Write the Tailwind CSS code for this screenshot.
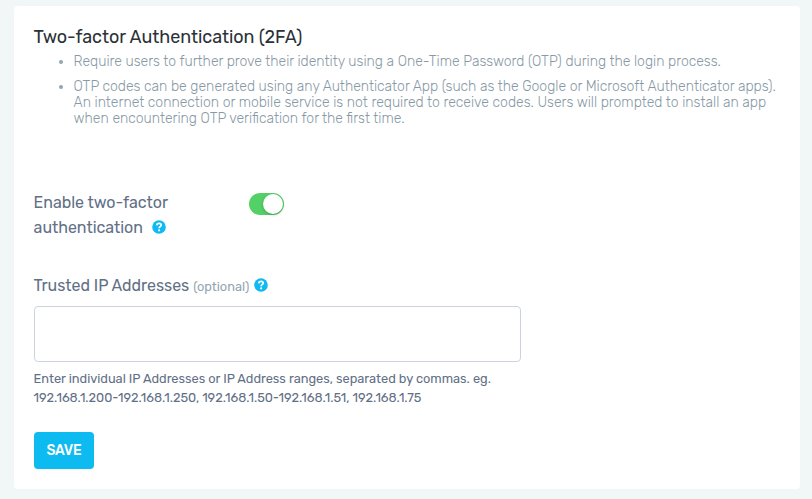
<!DOCTYPE html>
<html lang="en">
<head>
    <meta charset="UTF-8">
    <meta name="viewport" content="width=device-width, initial-scale=1.0">
    <title>Two-factor Authentication</title>
    <script src="https://cdn.jsdelivr.net/npm/@tailwindcss/browser@4"></script>
</head>
<body class="h-[499px] overflow-hidden bg-[#f1f7f7] pt-1.5 pl-3.5 font-[Rubik,Roboto,sans-serif] text-[#627086]">
    <div class="w-[786px] h-[483px] rounded bg-white pr-5 pl-[19.6px] pt-[18px]">
        <h1 class="h-[30px] text-lg leading-[26px] tracking-[-0.04px] text-[#2b3137] whitespace-nowrap">Two-factor Authentication (2FA)</h1>

        <ul class="ml-10 h-[132px] space-y-[9px] text-sm leading-4 font-light text-[#8799a5] list-disc marker:text-[#93a5b1] whitespace-nowrap">
            <li>Require users to further prove their identity using a One-Time Password (OTP) during the login process.</li>
            <li>
                <span class="block">OTP codes can be generated using any Authenticator App (such as the Google or Microsoft Authenticator apps).</span>
                <span class="block">An internet connection or mobile service is not required to receive codes. Users will prompted to install an app</span>
                <span class="block">when encountering OTP verification for the first time.</span>
            </li>
        </ul>

        <!-- Enable toggle -->
        <div class="flex h-[87px] pt-[4px]">
            <label class="w-[215.4px] text-base leading-[25px] tracking-[-0.03px]">
                <span class="block">Enable two-factor</span>
                <span class="flex items-center gap-[9px]">
                    authentication
                    <svg class="-mt-px size-[14px]" viewBox="0 0 14 14" fill="none">
                        <circle cx="7" cy="7" r="6.8" fill="#0dbaf2"/>
                        <path d="M4.7 5.4C4.9 3.9 5.9 3.3 7.1 3.3c1.2 0 2.1.7 2.1 1.8 0 1.6-2.1 1.5-2.1 3.1" stroke="#fff" stroke-width="1.7"/>
                        <circle cx="7.1" cy="10.3" r="1.1" fill="#fff"/>
                    </svg>
                </span>
            </label>
            <div class="mt-[3px] flex h-[22px] w-[35px] justify-end rounded-full bg-[#53d066] p-px">
                <div class="size-5 rounded-full bg-white shadow-[0_1px_3px_rgba(0,0,0,0.25)]"></div>
            </div>
        </div>

        <!-- Trusted IPs -->
        <label class="flex h-[33px] items-center pb-[8px] leading-[25px] tracking-[-0.03px]">
            Trusted IP Addresses
            <span class="ml-1 pt-0.5 text-[12.8px] text-[#93a5b1]">(optional)</span>
            <svg class="-mt-px ml-[5px] size-[14px]" viewBox="0 0 14 14" fill="none">
                <circle cx="7" cy="7" r="6.8" fill="#0dbaf2"/>
                <path d="M4.7 5.4C4.9 3.9 5.9 3.3 7.1 3.3c1.2 0 2.1.7 2.1 1.8 0 1.6-2.1 1.5-2.1 3.1" stroke="#fff" stroke-width="1.7"/>
                <circle cx="7.1" cy="10.3" r="1.1" fill="#fff"/>
            </svg>
        </label>
        <textarea class="ml-[0.4px] block h-14 w-[487px] resize-none rounded border border-[#cdd3de] bg-white"></textarea>
        <p class="mt-[7px] text-[12.8px] leading-[19px] tracking-[-0.025px] whitespace-nowrap">
            <span class="block">Enter individual IP Addresses or IP Address ranges, separated by commas. eg.</span>
            <span class="block">192.168.1.200-192.168.1.250, 192.168.1.50-192.168.1.51, 192.168.1.75</span>
        </p>

        <button class="mt-[25px] ml-[0.4px] flex h-[37px] w-[60px] items-center justify-center rounded bg-[#0dbbf0] text-sm font-medium tracking-[-0.2px] text-white">SAVE</button>
    </div>
</body>
</html>
